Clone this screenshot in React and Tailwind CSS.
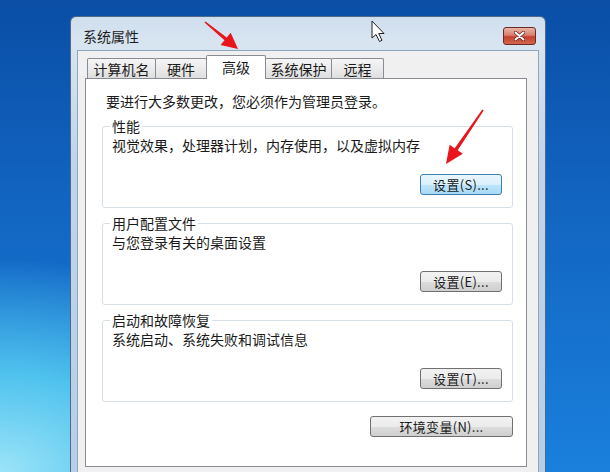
import React from 'react';

const TABS = [
  { label: '计算机名', w: 'w-[69px]' },
  { label: '硬件', w: 'w-[52px]' },
  { label: '高级', w: 'w-[60px]', active: true },
  { label: '系统保护', w: 'w-[67px]' },
  { label: '远程', w: 'w-[53px]' },
];

const GROUPS = [
  { title: '性能', desc: '视觉效果，处理器计划，内存使用，以及虚拟内存', btn: '设置(S)...', focused: true, mt: 'mt-[7px]' },
  { title: '用户配置文件', desc: '与您登录有关的桌面设置', btn: '设置(E)...', mt: 'mt-[6px]' },
  { title: '启动和故障恢复', desc: '系统启动、系统失败和调试信息', btn: '设置(T)...', mt: 'mt-[6px]' },
];

function WinButton({ children, focused, className = '' }) {
  return (
    <button
      className={`h-[21px] rounded-[3px] border text-[13px] leading-none text-[#1a1a1a] tracking-[0.3px] ${
        focused
          ? 'border-[#3c7fb1] bg-[linear-gradient(180deg,#eaf6fd_0%,#d9f0fc_50%,#bee6fd_51%,#a7d9f5_100%)]'
          : 'border-[#707070] bg-[linear-gradient(180deg,#f2f2f2_0%,#ebebeb_50%,#dddddd_51%,#cfcfcf_100%)]'
      } ${className}`}
    >
      {children}
    </button>
  );
}

function GroupBox({ title, desc, btn, focused, mt }) {
  return (
    <fieldset className={`${mt} rounded-[3px] border border-[#d5dfe5] pl-[7px] pr-[10px] pb-[12px]`}>
      <legend className="px-[2px] text-[14px] leading-[18px]">{title}</legend>
      <p className="mt-[1px] pl-[2px] text-[14px] leading-[18px]">{desc}</p>
      <div className="mt-[20px] flex justify-end">
        <WinButton focused={focused} className="w-[82px]">{btn}</WinButton>
      </div>
    </fieldset>
  );
}

export default function App() {
  return (
    <div className="relative h-[472px] w-[610px] overflow-hidden pl-[70px] pt-[16px] font-['Noto_Sans_CJK_SC','Noto_Sans',sans-serif] text-[#1a1a1a] bg-[radial-gradient(ellipse_70%_60%_at_0%_100%,#9be4f8_0%,#4fc2ee_35%,rgba(40,150,225,0)_75%),linear-gradient(180deg,#0a4ea6_0%,#1266c2_45%,#1a80dc_100%)]">
      {/* dialog window */}
      <div className="h-[470px] w-[476px] rounded-t-[6px] border border-[#4e6a88] bg-[linear-gradient(180deg,#cfdeee_0%,#d8e5f1_5%,#c0d5ea_30%,#b6cee8_100%)]">
        {/* title bar */}
        <div className="flex h-[33px] items-start justify-between pl-[12px] pr-[9px] pt-[10px]">
          <span className="text-[14px] leading-[18px] text-[#1e1e1e]">系统属性</span>
          <div className="flex h-[18px] w-[33px] items-center justify-center rounded-[3px] border border-[#6b2b25] bg-[linear-gradient(180deg,#eab3a6_0%,#d9806f_45%,#c4412f_55%,#d2674f_100%)]">
            <svg width="11" height="10" viewBox="0 0 11 10">
              <path d="M1.5 1.5 L9.5 8.5 M9.5 1.5 L1.5 8.5" stroke="#5a1e18" strokeWidth="3.4" strokeLinecap="round" />
              <path d="M1.5 1.5 L9.5 8.5 M9.5 1.5 L1.5 8.5" stroke="#ffffff" strokeWidth="2" strokeLinecap="round" />
            </svg>
          </div>
        </div>

        {/* client area */}
        <div className="mx-[6px] h-[430px] border border-[#8ea6be] bg-[#f0f0f0] pl-[7px] pr-[9px] pt-[4px]">
          {/* tabs */}
          <div className="flex items-end pl-[2px]">
            {TABS.map((t, i) =>
              t.active ? (
                <div
                  key={t.label}
                  className={`${t.w} relative z-10 -mb-px -ml-px flex h-[24px] items-start justify-center rounded-t-[2px] border border-b-0 border-[#898c95] bg-white pt-[2px] text-[14px] leading-[18px]`}
                >
                  {t.label}
                </div>
              ) : (
                <div
                  key={t.label}
                  className={`${t.w} ${i === 0 ? '' : '-ml-px'} flex h-[20px] items-center justify-center rounded-t-[2px] border border-b-0 border-[#898c95] bg-[linear-gradient(180deg,#f5f5f5_0%,#ebebeb_50%,#dedede_100%)] text-[14px] leading-[18px]`}
                >
                  {t.label}
                </div>
              )
            )}
          </div>

          {/* tab panel */}
          <div className="h-[389px] w-[442px] border border-[#898c95] bg-white pl-[16px] pr-[13px] pt-[13px]">
            <p className="pl-[4px] text-[14px] leading-[18px]">要进行大多数更改，您必须作为管理员登录。</p>
            {GROUPS.map((g) => (
              <GroupBox key={g.title} {...g} />
            ))}
            <div className="mt-[14px] flex justify-end">
              <WinButton className="w-[143px]">环境变量(N)...</WinButton>
            </div>
          </div>
        </div>
      </div>

      {/* annotations: mouse pointer and red arrows */}
      <svg className="pointer-events-none absolute left-0 top-0" width="610" height="472" viewBox="0 0 610 472">
        <path
          d="M372 21 L372 38 L376 34.5 L379.5 41.5 L382 40.3 L378.7 33.5 L384 33.5 Z"
          fill="#ffffff"
          stroke="#222"
          strokeWidth="1"
          strokeLinejoin="round"
        />
        <polygon
          points="204.5,22.6 224.5,40.3 220.5,45.1 238,49 230.7,32.7 226.7,37.5 205.5,21.4"
          fill="#e8161c"
        />
        <polygon
          points="482.3,109.5 454.7,148.2 449.6,144.7 446,164 462.8,153.7 457.7,150.2 483.7,110.5"
          fill="#e8161c"
        />
      </svg>
    </div>
  );
}
